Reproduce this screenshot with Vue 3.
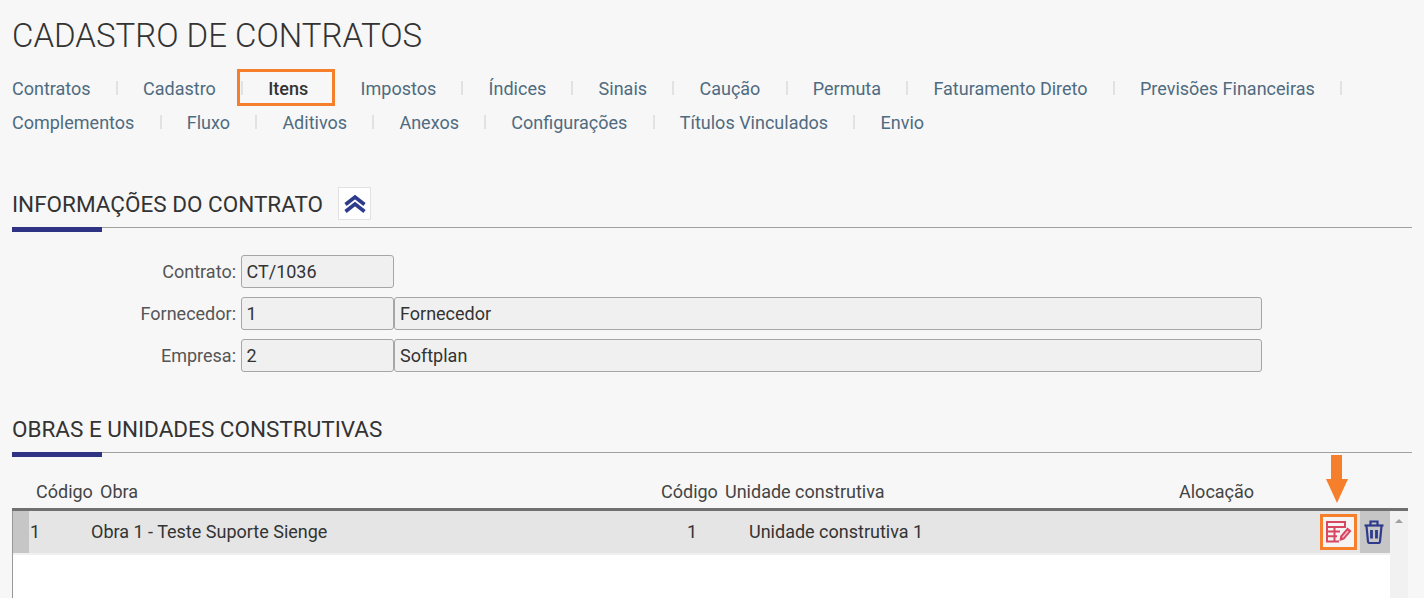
<script setup>
const row1 = ['Contratos','Cadastro','Itens','Impostos','Índices','Sinais','Caução','Permuta','Faturamento Direto','Previsões Financeiras']
const row2 = ['Complementos','Fluxo','Aditivos','Anexos','Configurações','Títulos Vinculados','Envio']
const rows = [
  { label: 'Contrato:', code: 'CT/1036', name: null },
  { label: 'Fornecedor:', code: '1', name: 'Fornecedor' },
  { label: 'Empresa:', code: '2', name: 'Softplan' }
]
</script>

<template>
  <div class="page">
    <h1 class="title">CADASTRO DE CONTRATOS</h1>

    <nav class="tabs">
      <div class="tab-row">
        <template v-for="t in row1" :key="t">
          <span class="tab" :class="{ active: t === 'Itens' }">{{ t }}</span>
          <i class="sep"></i>
        </template>
      </div>
      <div class="tab-row">
        <template v-for="(t, i) in row2" :key="t">
          <span class="tab">{{ t }}</span>
          <i v-if="i < row2.length - 1" class="sep"></i>
        </template>
      </div>
    </nav>

    <section class="section first">
      <div class="section-head">
        <h2>INFORMAÇÕES DO CONTRATO</h2>
        <button class="collapse" type="button" aria-label="Recolher">
          <svg width="24" height="20" viewBox="0 0 24 20">
            <path d="M2.5 10.5 L12 3 L21.5 10.5 M2.5 17.5 L12 10 L21.5 17.5" fill="none" stroke="#2e3a8c" stroke-width="3.6"/>
          </svg>
        </button>
      </div>
      <div class="form">
        <div v-for="r in rows" :key="r.label" class="form-row">
          <label>{{ r.label }}</label>
          <div class="field code">{{ r.code }}</div>
          <div v-if="r.name" class="field name">{{ r.name }}</div>
        </div>
      </div>
    </section>

    <section class="section second">
      <div class="section-head">
        <h2>OBRAS E UNIDADES CONSTRUTIVAS</h2>
      </div>

      <div class="grid-head">
        <span class="h-cod">Código</span>
        <span class="h-obra">Obra</span>
        <span class="h-cod2">Código</span>
        <span class="h-uni">Unidade construtiva</span>
        <span class="h-aloc">Alocação</span>
      </div>

      <div class="grid">
        <div class="grid-main">
          <div class="data-row">
            <span class="handle"></span>
            <span class="c-cod">1</span>
            <span class="c-obra">Obra 1 - Teste Suporte Sienge</span>
            <span class="c-cod2">1</span>
            <span class="c-uni">Unidade construtiva 1</span>
            <span class="actions">
              <span class="edit">
                <svg width="26" height="22" viewBox="0 0 26 22">
                  <g fill="none" stroke="#d9465f" stroke-width="2">
                    <path d="M1 1 H19 V6 H1 Z"/>
                    <path d="M1 6 V20.5 H13"/>
                    <path d="M1 10.5 H14 M1 15.3 H11 M8.5 6 V20"/>
                  </g>
                  <path d="M13.5 20 L14.2 15 L21.5 6.5 L25.5 10 L18.2 18.6 Z" fill="#d9465f"/>
                  <path d="M16 16 L21.5 9.6 L22.6 10.6 L17 17 Z" fill="#f3c3cb"/>
                </svg>
                <span class="arrow"></span>
              </span>
              <span class="trash">
                <svg width="20" height="24" viewBox="0 0 20 24">
                  <g fill="none" stroke="#2e3a8c" stroke-width="2.2">
                    <path d="M0.5 5.5 H19.5"/>
                    <path d="M6.5 5 V1.5 H13.5 V5"/>
                    <path d="M2.5 6 L4 21.5 Q4.2 23 5.5 23 H14.5 Q15.8 23 16 21.5 L17.5 6"/>
                  </g>
                  <path d="M7.5 10 V18.5 M12.5 10 V18.5" stroke="#2e3a8c" stroke-width="2.8"/>
                </svg>
              </span>
            </span>
          </div>
        </div>
        <div class="scrollbar"><span class="up"></span></div>
      </div>
    </section>
  </div>
</template>

<style>
html, body { margin: 0; background: #f7f7f7; overflow: hidden; }
</style>

<style scoped>
.page {
  width: 1424px;
  height: 598px;
  overflow: hidden;
  background: #f7f7f7;
  font-family: Roboto, "Noto Sans", sans-serif;
  box-sizing: border-box;
  padding: 0 12px;
}
.title {
  margin: 0;
  padding-top: 16px;
  font-size: 33px;
  line-height: 40px;
  font-weight: 300;
  color: #333;
}
.tabs { margin-top: 15px; }
.tab-row {
  display: flex;
  align-items: center;
  gap: 25.2px;
  height: 34px;
  font-size: 18px;
  color: #4f6b80;
  position: relative;
}
.tab { white-space: nowrap; }
.tab.active { color: #333; font-weight: 500; }
.tab.active::after {
  content: "";
  position: absolute;
  left: 225px;
  top: -2px;
  width: 92px;
  height: 31px;
  border: 3px solid #f57f2a;
}
.sep { width: 2px; height: 14px; background: #e2e2e2; flex: none; }
.section.first { margin-top: 48px; }
.section.second { margin-top: 40px; }
.section-head {
  display: flex;
  align-items: center;
  gap: 15px;
  height: 40px;
  border-bottom: 1px solid #a0a0a0;
  position: relative;
}
.section-head::after {
  content: "";
  position: absolute;
  left: 0;
  bottom: -5px;
  width: 90px;
  height: 5px;
  background: #2e3383;
}
.section-head h2 {
  margin: 0;
  padding-bottom: 6px;
  font-size: 22.5px;
  font-weight: 400;
  color: #333;
}
.collapse {
  align-self: flex-start;
  width: 33px;
  height: 33px;
  padding: 0;
  display: flex;
  align-items: center;
  justify-content: center;
  background: #fff;
  border: 1px solid #e2e2e2;
}
.form { margin-top: 27px; display: flex; flex-direction: column; gap: 9px; }
.form-row { display: flex; align-items: center; height: 33px; }
.form-row label {
  width: 229px;
  padding-right: 5px;
  box-sizing: border-box;
  text-align: right;
  font-size: 18px;
  color: #555;
}
.field {
  box-sizing: border-box;
  height: 33px;
  line-height: 31px;
  border: 1px solid #a6a6a6;
  border-radius: 3px;
  background: #f0f0f0;
  padding: 0 5px;
  font-size: 18px;
  color: #333;
}
.field.code { width: 153px; padding-left: 4.5px; }
.field.name { width: 868px; }
.grid-head {
  position: relative;
  height: 38px;
  margin-top: 17px;
  font-size: 18px;
  color: #444;
}
.grid-head span { position: absolute; top: 11px; white-space: nowrap; }
.h-cod { left: 24px; }
.h-obra { left: 88px; }
.h-cod2 { left: 649px; }
.h-uni { left: 713px; }
.h-aloc { left: 1167px; }
.grid {
  display: flex;
  width: 1396px;
  height: 100px;
  border-top: 3px solid #707070;
  box-sizing: border-box;
  background: #f2f2f2;
}
.grid-main {
  flex: 1;
  background: #fff;
  border-left: 1px solid #999;
}
.data-row {
  display: flex;
  align-items: center;
  height: 42px;
  background: #e5e5e5;
  border-bottom: 2px solid #f0f0f0;
  font-size: 18px;
  line-height: 40px;
  color: #333;
}
.data-row > span:not(.actions):not(.handle) { padding-bottom: 1px; }
.handle { width: 16px; height: 100%; background: #c6c6c6; flex: none; }
.c-cod { width: 62px; padding-left: 1px; box-sizing: border-box; }
.c-obra { width: 596px; }
.c-cod2 { width: 62px; }
.c-uni { width: 571px; }
.actions { display: flex; align-items: center; height: 100%; }
.edit {
  position: relative;
  width: 37px;
  height: 36px;
  box-sizing: border-box;
  border: 3px solid #f57f2a;
  background: #f4f4f4;
  display: flex;
  align-items: center;
  justify-content: center;
}
.arrow {
  position: absolute;
  left: 8px;
  top: -62px;
  width: 11px;
  height: 26px;
  background: #f57f2a;
}
.arrow::after {
  content: "";
  position: absolute;
  left: -5px;
  top: 24px;
  border-left: 11px solid transparent;
  border-right: 11px solid transparent;
  border-top: 24px solid #f57f2a;
}
.trash {
  width: 30px;
  height: 100%;
  margin-left: 3px;
  padding-right: 3px;
  box-sizing: border-box;
  background: #c6c6c6;
  display: flex;
  align-items: center;
  justify-content: center;
}
.scrollbar { width: 18px; flex: none; position: relative; background: #f1f1f1; }
.up {
  position: absolute;
  left: 5px;
  top: 8px;
  border-left: 4px solid transparent;
  border-right: 4px solid transparent;
  border-bottom: 4px solid #a0a0a0;
}
</style>
